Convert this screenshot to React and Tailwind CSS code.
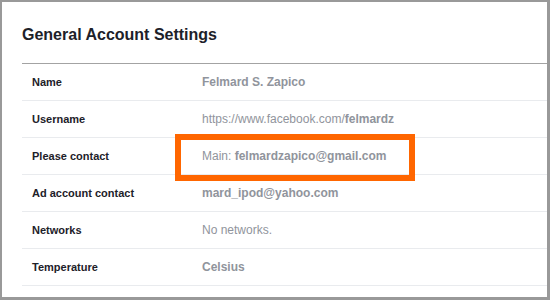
const rows = [
  { label: "Name", value: <span className="font-bold">Felmard S. Zapico</span> },
  {
    label: "Username",
    value: (
      <>
        https://www.facebook.com/<span className="font-bold">felmardz</span>
      </>
    ),
  },
  {
    label: "Please contact",
    value: (
      <>
        Main: <span className="font-bold">felmardzapico@gmail.com</span>
      </>
    ),
    highlight: true,
  },
  { label: "Ad account contact", value: <span className="font-bold">mard_ipod@yahoo.com</span> },
  { label: "Networks", value: "No networks." },
  { label: "Temperature", value: <span className="font-bold">Celsius</span> },
];

const App = () => {
  return (
    <div
      className="w-[550px] h-[300px] bg-white border-t-2 border-l-2 border-r-[3px] border-b-[3px] border-[#999999] pl-[20px] overflow-hidden"
      style={{ fontFamily: '"Liberation Sans", Arial, sans-serif' }}
    >
      {/* Header */}
      <div className="h-[62px] pt-[23px] border-b border-[#a3a3a3]">
        <h1 className="text-[16px] leading-[20px] font-bold text-[#1d2129]">
          General Account Settings
        </h1>
      </div>

      {/* Settings rows */}
      {rows.map((row) => (
        <div
          key={row.label}
          className="relative h-[37px] flex items-center border-b border-[#e9ebee] pl-[10px]"
        >
          <div className="w-[170px] text-[11px] font-bold text-[#1d2129]">{row.label}</div>
          <div className="text-[12px] text-[#90949c]">{row.value}</div>
          {row.highlight && (
            <div className="absolute left-[153px] top-[-4px] w-[240px] h-[47px] border-[6px] border-[#ff6600]"></div>
          )}
        </div>
      ))}
    </div>
  );
};

export default App;
